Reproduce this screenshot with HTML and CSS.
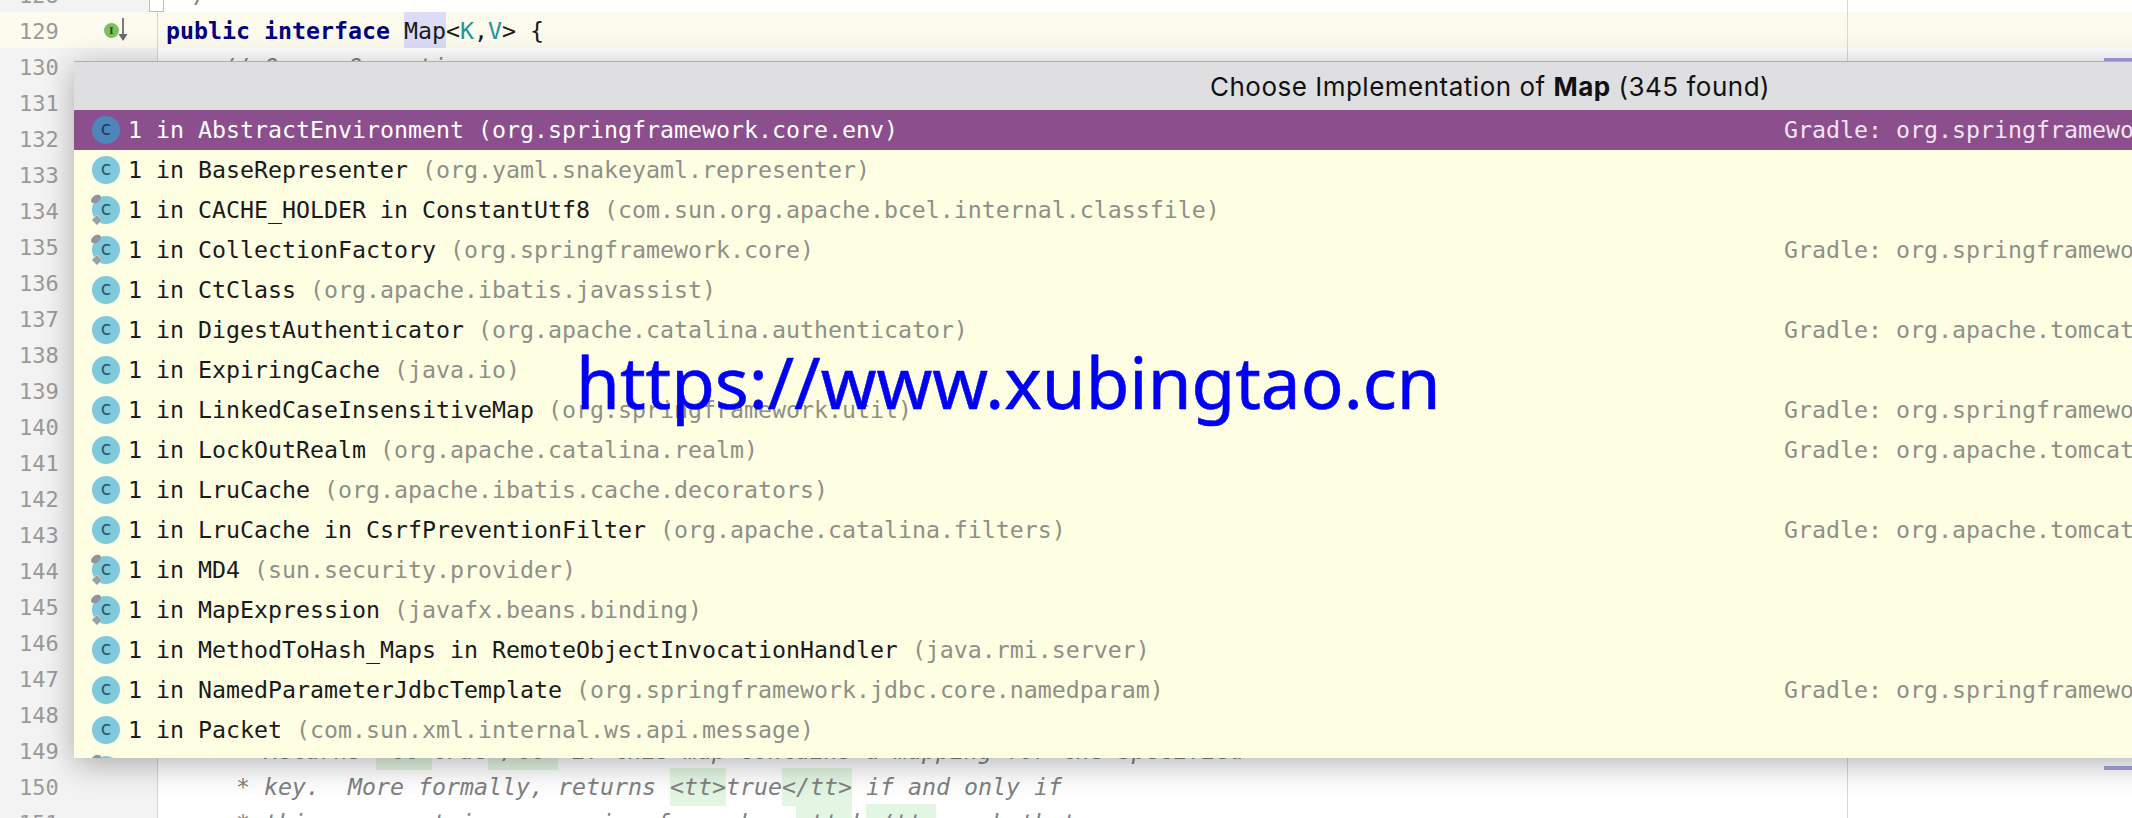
FILE: index.html
```html
<!DOCTYPE html>
<html lang="en">
<head>
<meta charset="utf-8">
<title>Choose Implementation of Map</title>
<link rel="stylesheet" href="styles.css">
</head>
<body>
<main class="editor">
  <div class="line"><div class="gutter"><span class="num">128</span><span class="fold"></span></div><div class="code comment"> */</div></div>
  <div class="line current"><div class="gutter"><span class="num">129</span>
    <span class="impl"><span class="impl-dot">I</span><svg class="impl-arrow" width="10" height="24" viewBox="0 0 10 24"><path d="M5 0V18" stroke="#5a5a5a" stroke-width="1.6" fill="none"/><path d="M.5 16H9.500L5 23Z" fill="#6a6a6a"/></svg></span></div>
    <div class="code"><b class="kw">public</b> <b class="kw">interface</b> <span class="hit">Map</span>&lt;<span class="tp">K</span>,<span class="tp">V</span>&gt; {</div></div>
  <div class="line"><div class="gutter"><span class="num">130</span></div><div class="code comment">    // Query Operations</div></div>
  <div class="line"><div class="gutter"><span class="num">131</span></div><div class="code"></div></div>
  <div class="line"><div class="gutter"><span class="num">132</span></div><div class="code"></div></div>
  <div class="line"><div class="gutter"><span class="num">133</span></div><div class="code"></div></div>
  <div class="line"><div class="gutter"><span class="num">134</span></div><div class="code"></div></div>
  <div class="line"><div class="gutter"><span class="num">135</span></div><div class="code"></div></div>
  <div class="line"><div class="gutter"><span class="num">136</span></div><div class="code"></div></div>
  <div class="line"><div class="gutter"><span class="num">137</span></div><div class="code"></div></div>
  <div class="line"><div class="gutter"><span class="num">138</span></div><div class="code"></div></div>
  <div class="line"><div class="gutter"><span class="num">139</span></div><div class="code"></div></div>
  <div class="line"><div class="gutter"><span class="num">140</span></div><div class="code"></div></div>
  <div class="line"><div class="gutter"><span class="num">141</span></div><div class="code"></div></div>
  <div class="line"><div class="gutter"><span class="num">142</span></div><div class="code"></div></div>
  <div class="line"><div class="gutter"><span class="num">143</span></div><div class="code"></div></div>
  <div class="line"><div class="gutter"><span class="num">144</span></div><div class="code"></div></div>
  <div class="line"><div class="gutter"><span class="num">145</span></div><div class="code"></div></div>
  <div class="line"><div class="gutter"><span class="num">146</span></div><div class="code"></div></div>
  <div class="line"><div class="gutter"><span class="num">147</span></div><div class="code"></div></div>
  <div class="line"><div class="gutter"><span class="num">148</span></div><div class="code"></div></div>
  <div class="line"><div class="gutter"><span class="num">149</span></div><div class="code comment">     * Returns <span class="tag">&lt;tt&gt;</span>true<span class="tag">&lt;/tt&gt;</span> if this map contains a mapping for the specified</div></div>
  <div class="line"><div class="gutter"><span class="num">150</span></div><div class="code comment">     * key.  More formally, returns <span class="tag">&lt;tt&gt;</span>true<span class="tag">&lt;/tt&gt;</span> if and only if</div></div>
  <div class="line"><div class="gutter"><span class="num">151</span></div><div class="code comment">     * this map contains a mapping for a key <span class="tag">&lt;tt&gt;</span>k<span class="tag">&lt;/tt&gt;</span> such that</div></div>
</main>

<div class="guide"></div>
<div class="mark mark-top"></div>
<div class="mark mark-bottom"></div>

<section class="popup">
  <header class="popup-title">Choose Implementation of&nbsp;<b>Map</b>&nbsp;(345 found)</header>
  <ul class="rows">
    <li class="row selected"><span class="icon"><span class="disc">c</span></span><span class="name">1 in AbstractEnvironment <span class="pkg">(org.springframework.core.env)</span></span><span class="loc">Gradle: org.springframework</span></li>
    <li class="row"><span class="icon"><span class="disc">c</span></span><span class="name">1 in BaseRepresenter <span class="pkg">(org.yaml.snakeyaml.representer)</span></span><span class="loc"></span></li>
    <li class="row"><span class="icon pinned"><span class="disc">c</span><svg class="pin" width="32" height="32" viewBox="0 0 32 32"><ellipse cx="6" cy="5" rx="5.5" ry="3.6" transform="rotate(-35 6 5)" fill="#8f959a"/><path d="M7 21L12 26L7 31L2 26Z" fill="#9aa0a3" stroke="#c9cdca" stroke-width="1"/></svg></span><span class="name">1 in CACHE_HOLDER in ConstantUtf8 <span class="pkg">(com.sun.org.apache.bcel.internal.classfile)</span></span><span class="loc"></span></li>
    <li class="row"><span class="icon pinned"><span class="disc">c</span><svg class="pin" width="32" height="32" viewBox="0 0 32 32"><ellipse cx="6" cy="5" rx="5.5" ry="3.6" transform="rotate(-35 6 5)" fill="#8f959a"/><path d="M7 21L12 26L7 31L2 26Z" fill="#9aa0a3" stroke="#c9cdca" stroke-width="1"/></svg></span><span class="name">1 in CollectionFactory <span class="pkg">(org.springframework.core)</span></span><span class="loc">Gradle: org.springframework</span></li>
    <li class="row"><span class="icon"><span class="disc">c</span></span><span class="name">1 in CtClass <span class="pkg">(org.apache.ibatis.javassist)</span></span><span class="loc"></span></li>
    <li class="row"><span class="icon"><span class="disc">c</span></span><span class="name">1 in DigestAuthenticator <span class="pkg">(org.apache.catalina.authenticator)</span></span><span class="loc">Gradle: org.apache.tomcat</span></li>
    <li class="row"><span class="icon"><span class="disc">c</span></span><span class="name">1 in ExpiringCache <span class="pkg">(java.io)</span></span><span class="loc"></span></li>
    <li class="row"><span class="icon"><span class="disc">c</span></span><span class="name">1 in LinkedCaseInsensitiveMap <span class="pkg">(org.springframework.util)</span></span><span class="loc">Gradle: org.springframework</span></li>
    <li class="row"><span class="icon"><span class="disc">c</span></span><span class="name">1 in LockOutRealm <span class="pkg">(org.apache.catalina.realm)</span></span><span class="loc">Gradle: org.apache.tomcat</span></li>
    <li class="row"><span class="icon"><span class="disc">c</span></span><span class="name">1 in LruCache <span class="pkg">(org.apache.ibatis.cache.decorators)</span></span><span class="loc"></span></li>
    <li class="row"><span class="icon"><span class="disc">c</span></span><span class="name">1 in LruCache in CsrfPreventionFilter <span class="pkg">(org.apache.catalina.filters)</span></span><span class="loc">Gradle: org.apache.tomcat</span></li>
    <li class="row"><span class="icon pinned"><span class="disc">c</span><svg class="pin" width="32" height="32" viewBox="0 0 32 32"><ellipse cx="6" cy="5" rx="5.5" ry="3.6" transform="rotate(-35 6 5)" fill="#8f959a"/><path d="M7 21L12 26L7 31L2 26Z" fill="#9aa0a3" stroke="#c9cdca" stroke-width="1"/></svg></span><span class="name">1 in MD4 <span class="pkg">(sun.security.provider)</span></span><span class="loc"></span></li>
    <li class="row"><span class="icon pinned"><span class="disc">c</span><svg class="pin" width="32" height="32" viewBox="0 0 32 32"><ellipse cx="6" cy="5" rx="5.5" ry="3.6" transform="rotate(-35 6 5)" fill="#8f959a"/><path d="M7 21L12 26L7 31L2 26Z" fill="#9aa0a3" stroke="#c9cdca" stroke-width="1"/></svg></span><span class="name">1 in MapExpression <span class="pkg">(javafx.beans.binding)</span></span><span class="loc"></span></li>
    <li class="row"><span class="icon"><span class="disc">c</span></span><span class="name">1 in MethodToHash_Maps in RemoteObjectInvocationHandler <span class="pkg">(java.rmi.server)</span></span><span class="loc"></span></li>
    <li class="row"><span class="icon"><span class="disc">c</span></span><span class="name">1 in NamedParameterJdbcTemplate <span class="pkg">(org.springframework.jdbc.core.namedparam)</span></span><span class="loc">Gradle: org.springframework</span></li>
    <li class="row"><span class="icon"><span class="disc">c</span></span><span class="name">1 in Packet <span class="pkg">(com.sun.xml.internal.ws.api.message)</span></span><span class="loc"></span></li>
    <li class="row"><span class="icon pinned"><span class="disc">c</span><svg class="pin" width="32" height="32" viewBox="0 0 32 32"><ellipse cx="6" cy="5" rx="5.5" ry="3.6" transform="rotate(-35 6 5)" fill="#8f959a"/></svg></span><span class="name"></span><span class="loc"></span></li>
  </ul>
</section>

<div class="watermark">https://www.xubingtao.cn</div>
</body>
</html>
```
FILE: styles.css
```css
* { box-sizing: border-box; }
html, body { margin: 0; padding: 0; height: 100%; overflow: hidden; background: #fff; }
body { position: relative; font-family: "DejaVu Sans Mono", monospace; font-size: 23.25px; color: #1a1a1a; }

.editor { display: flex; flex-direction: column; margin-top: -24px; }
.line { display: flex; height: 36px; line-height: 36px; }
.line.current { background: #fdfbee; }
.gutter { position: relative; flex: none; width: 158px; display: flex; align-items: center; background: #f3f3f3; border-right: 1px solid #d4d4d4; }
.line.current .gutter { background: #fdfbee; }
.num { margin-left: 19px; padding-top: 4px; font-size: 22px; color: #9a9a9a; }
.fold { position: absolute; right: -7px; bottom: 0; width: 15px; height: 17px; background: #fff; border: 1px solid #bdbdbd; }
.impl { display: flex; align-items: center; margin-left: 45px; }
.impl-dot { width: 15px; height: 15px; border-radius: 50%; background: #7fbf62; color: #2f4a28; font: 700 10px/15px "DejaVu Serif", serif; text-align: center; }
.impl-arrow { display: block; margin-left: -1px; }
.code { flex: 1; padding-left: 8px; white-space: pre; line-height: 38px; }
.kw { color: #000080; font-weight: 700; }
.hit { display: inline-block; height: 36px; background: #dcdcf6; }
.tp { color: #20999d; }
.comment { color: #808080; font-style: italic; }
.tag { background: #e3f6e3; display: inline-block; }

.guide { position: absolute; left: 1847px; top: 0; bottom: 0; width: 1px; background: #d8d8d8; }
.mark { position: absolute; left: 2104px; width: 28px; background: #a89fe2; }
.mark-top { top: 58px; height: 3px; }
.mark-bottom { top: 766px; height: 4px; }

.popup { position: absolute; left: 74px; top: 61px; width: 2832px; height: 697px; overflow: hidden; background: #fefee3; border-top: 1px solid #b0b0b0; box-shadow: 0 6px 30px rgba(0, 0, 0, .3); }
.popup-title { height: 48px; display: flex; align-items: center; justify-content: center; background: #dfdfe1; font-family: Inter, "Liberation Sans", sans-serif; font-size: 26px; letter-spacing: .5px; color: #111; }
.rows { list-style: none; margin: 0; padding: 0; }
.row { height: 40px; display: flex; align-items: center; padding-left: 16px; white-space: pre; color: #1a1a1a; }
.row.selected { background: #8b4f8d; color: #fff; }
.icon { position: relative; flex: none; width: 32px; height: 32px; margin-right: 6px; display: flex; align-items: center; justify-content: center; }
.disc { width: 28px; height: 28px; border-radius: 50%; background: #7fc9dd; color: #2c5563; font: 400 19px/25px "DejaVu Sans", sans-serif; text-align: center; }
.selected .disc { background: #4f86ba; color: #1d3a55; }
.pin { position: absolute; left: 0; top: 0; }
.name { flex: none; width: 1656px; padding-bottom: 2px; }
.pkg { color: #8f8f87; }
.selected .pkg { color: #fff; }
.loc { flex: 1; padding-bottom: 2px; color: #8f8f87; }
.selected .loc { color: #f3e6f3; }

.watermark { position: absolute; left: 576px; top: 332px; font-family: "Noto Sans", sans-serif; font-size: 71px; line-height: 100px; color: #0000f5; white-space: nowrap; -webkit-text-stroke: .6px #0000f5; }
```
